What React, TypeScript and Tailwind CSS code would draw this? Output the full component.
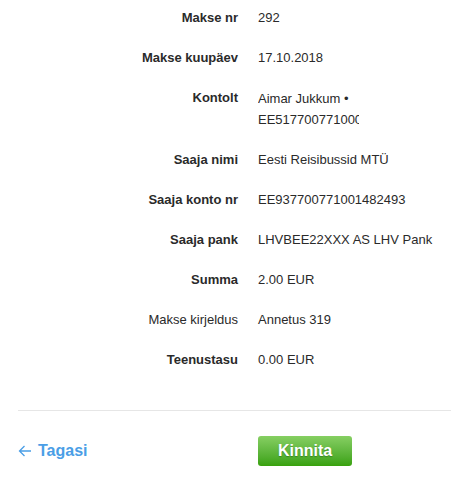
const rows: { label: string; value: string; bold?: boolean; clip?: boolean }[] = [
  { label: "Makse nr", value: "292", bold: true },
  { label: "Makse kuupäev", value: "17.10.2018", bold: true },
  { label: "Kontolt", value: "Aimar Jukkum • EE517700771000000000", bold: true, clip: true },
  { label: "Saaja nimi", value: "Eesti Reisibussid MTÜ", bold: true },
  { label: "Saaja konto nr", value: "EE937700771001482493", bold: true },
  { label: "Saaja pank", value: "LHVBEE22XXX AS LHV Pank", bold: true },
  { label: "Summa", value: "2.00 EUR", bold: true },
  { label: "Makse kirjeldus", value: "Annetus 319" },
  { label: "Teenustasu", value: "0.00 EUR", bold: true },
];

export default function App() {
  return (
    <div className="w-[451px] h-[478px] bg-white overflow-hidden font-['Liberation_Sans',Arial,sans-serif] text-[13px] text-[#2a2a2a]">
      <div className="pl-[18px]">
        <div className="-mt-[2px]">
          {rows.map((row) => (
            <div key={row.label} className="flex py-[10px] leading-[20px]">
              <div
                className={`w-[220px] shrink-0 text-right ${row.bold ? "font-bold" : ""}`}
              >
                {row.label}
              </div>
              <div
                className={`ml-[20px] ${row.clip ? "w-[101px] overflow-hidden leading-[21px]" : ""}`}
              >
                {row.value}
              </div>
            </div>
          ))}
        </div>

        <div className="mt-[30px] border-t border-[#e6e6e6]" />

        <div className="flex items-center mt-[25px]">
          <a href="#" className="w-[240px] flex items-center gap-[6px] text-[#4a9ee6] font-bold text-[16px]">
            <svg width="14" height="12" viewBox="0 0 14 12" fill="none" stroke="#4a9ee6" strokeWidth="1.3">
              <path d="M13 6H1.5M6.5 1L1.5 6l5 5" />
            </svg>
            Tagasi
          </a>
          <button className="w-[94px] h-[30px] rounded-[3px] bg-gradient-to-b from-[#86cf62] to-[#38a10a] text-white font-bold text-[16px] [text-shadow:0_1px_1px_rgba(0,60,0,0.35)]">
            Kinnita
          </button>
        </div>
      </div>
    </div>
  );
}
